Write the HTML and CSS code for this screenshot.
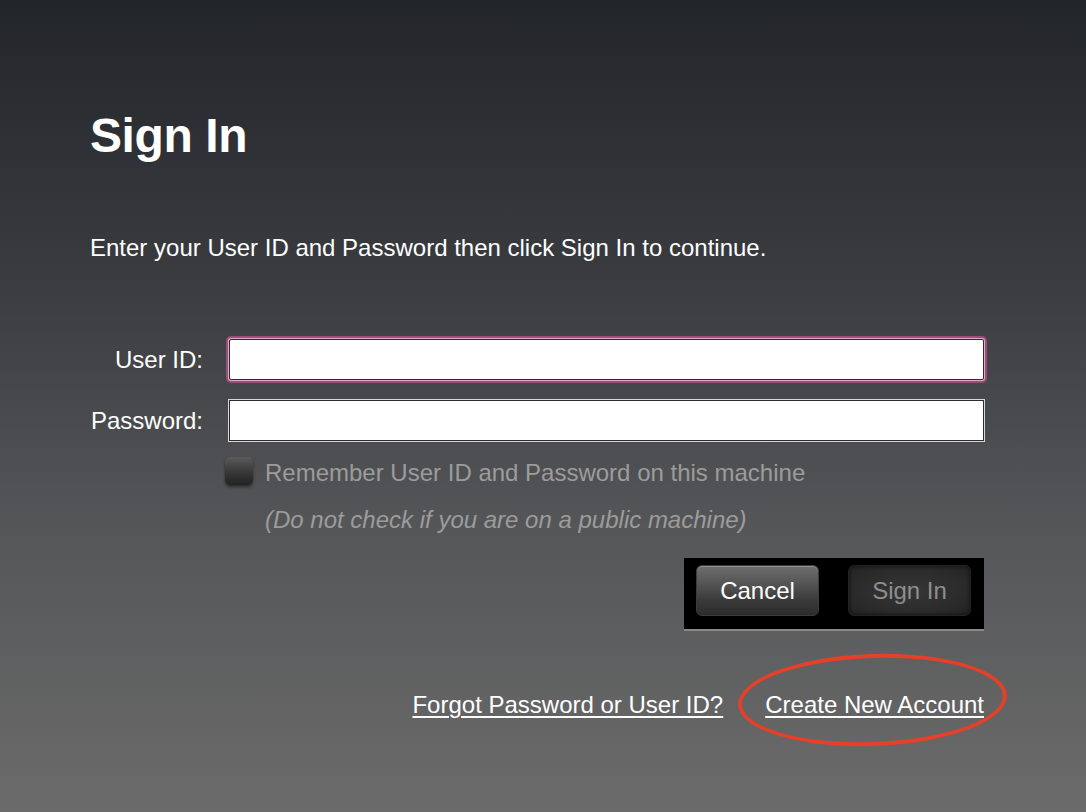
FILE: index.html
```html
<!DOCTYPE html>
<html>
<head>
<meta charset="utf-8">
<link rel="stylesheet" href="styles.css">
</head>
<body>
<div class="page">
  <h1 class="title">Sign In</h1>
  <p class="intro">Enter your User ID and Password then click Sign In to continue.</p>
  <form class="form">
    <label class="label" for="uid">User ID:</label>
    <div class="field focused"><input id="uid" class="input" type="text"></div>
    <label class="label" for="pwd">Password:</label>
    <div class="field"><input id="pwd" class="input" type="password"></div>
    <div class="remember">
      <span class="checkbox"></span>
      <div class="remember-text">
        <div class="remember-label">Remember User ID and Password on this machine</div>
        <div class="remember-note">(Do not check if you are on a public machine)</div>
      </div>
    </div>
    <div class="actions">
      <div class="button-bar">
        <button type="button" class="btn btn-cancel">Cancel</button>
        <button type="button" class="btn btn-signin">Sign In</button>
      </div>
    </div>
  </form>
  <div class="links">
    <a class="link" href="#">Forgot Password or User ID?</a>
    <span class="highlight"><a class="link" href="#">Create New Account</a></span>
  </div>
</div>
</body>
</html>
```
FILE: styles.css
```css
html, body {
  margin: 0;
  padding: 0;
}
body {
  width: 1086px;
  height: 812px;
  overflow: hidden;
  background: linear-gradient(180deg, #22252a 0%, #3a3c40 35%, #555658 65%, #6b6b6b 100%);
  font-family: "Liberation Sans", Arial, Helvetica, sans-serif;
  color: #ffffff;
}
.page {
  padding: 0 102px 0 90px;
}
.title {
  margin: 0;
  padding-top: 106px;
  font-size: 48px;
  line-height: 60px;
  font-weight: bold;
  letter-spacing: -0.4px;
}
.intro {
  margin: 67px 0 0;
  font-size: 24px;
  line-height: 30px;
}
.form {
  margin-top: 76px;
  display: grid;
  grid-template-columns: 113px 1fr;
  column-gap: 26px;
  row-gap: 20px;
  align-items: center;
}
.label {
  text-align: right;
  font-size: 24px;
  line-height: 41px;
}
.field {
  height: 41px;
  box-sizing: border-box;
  border: 1px solid #2c2c2c;
  box-shadow: 0 0 0 1px #d8d8d8;
  background: #ffffff;
}
.field.focused {
  box-shadow: 0 0 0 1px #e6a9c7, 0 0 0 3px #9a4d78;
  border-radius: 2px;
}
.input {
  display: block;
  width: 100%;
  height: 100%;
  box-sizing: border-box;
  border: 0;
  outline: none;
  background: transparent;
  font-family: inherit;
  font-size: 20px;
}
.remember {
  grid-column: 2;
  display: flex;
  align-items: flex-start;
  margin-left: -4px;
  margin-top: -4px;
}
.checkbox {
  flex: none;
  width: 28px;
  height: 28px;
  margin-top: 0;
  box-sizing: border-box;
  border-radius: 5px;
  background: linear-gradient(180deg, #5a5a5a 0%, #3a3a3a 50%, #222 100%);
  box-shadow: 0 2px 3px rgba(0,0,0,0.45);
}
.remember-text {
  margin-left: 12px;
  color: #9c9c9c;
  font-size: 24px;
}
.remember-label {
  line-height: 32px;
}
.remember-note {
  margin-top: 16px;
  font-style: italic;
  line-height: 30px;
}
.actions {
  grid-column: 1 / span 2;
  display: flex;
  justify-content: flex-end;
  margin-top: 3px;
}
.button-bar {
  display: flex;
  gap: 29px;
  width: 300px;
  height: 73px;
  box-sizing: border-box;
  padding: 7px 12px 0;
  background: #000;
  border-bottom: 2px solid #8a8a8a;
}
.btn {
  width: 123px;
  height: 51px;
  border-radius: 6px;
  font-family: inherit;
  font-size: 24px;
  padding: 0;
}
.btn-cancel {
  color: #fff;
  border: 1px solid #3c3c3c;
  background: linear-gradient(180deg, #6e6e6e 0%, #4e4e4e 45%, #3a3a3a 70%, #2c2c2c 100%);
  box-shadow: inset 0 1px 0 rgba(255,255,255,0.25);
}
.btn-signin {
  color: #8e8e8e;
  border: 1px solid #222;
  background: radial-gradient(ellipse at center, #363636 0%, #2a2a2a 70%, #222 100%);
  box-shadow: inset 0 0 4px rgba(0,0,0,0.6);
}
.links {
  margin-top: 59px;
  display: flex;
  justify-content: flex-end;
  align-items: center;
  gap: 42px;
  font-size: 24px;
  line-height: 30px;
}
.link {
  color: #fff;
  text-decoration: underline;
  text-underline-offset: 3px;
  text-decoration-thickness: 2px;
  line-height: 30px;
}
.highlight {
  position: relative;
  display: inline-block;
}
.highlight::before {
  content: "";
  position: absolute;
  left: -27px;
  right: -23px;
  top: -36px;
  bottom: -26px;
  border: 4px solid #e5402a;
  border-radius: 50%;
  transform: rotate(-2deg);
}
```
